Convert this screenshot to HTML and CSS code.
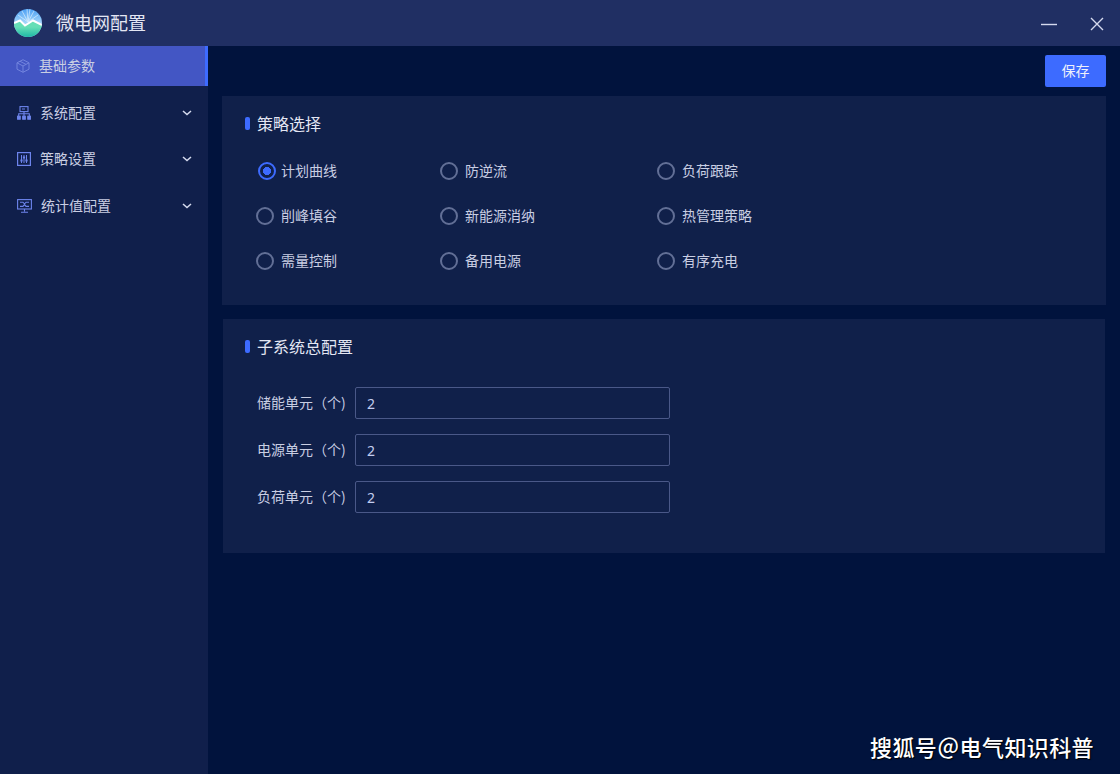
FILE: index.html
```html
<!DOCTYPE html>
<html lang="zh-CN">
<head>
<meta charset="utf-8">
<title>微电网配置</title>
<link rel="stylesheet" href="styles.css">
</head>
<body>
<div class="app">
  <header class="titlebar">
    <div class="brand">
      <svg class="logo" width="28" height="28" viewBox="0 0 28 28">
        <defs>
          <linearGradient id="sky" x1="0" y1="0" x2="0" y2="1"><stop offset="0" stop-color="#4b9ff4"/><stop offset=".5" stop-color="#a5d6fb"/></linearGradient>
          <linearGradient id="hill" x1="0" y1="0" x2="0" y2="1"><stop offset=".4" stop-color="#66dfb6"/><stop offset="1" stop-color="#1eb8a6"/></linearGradient>
          <clipPath id="disc"><circle cx="14" cy="14" r="14"/></clipPath>
        </defs>
        <g clip-path="url(#disc)">
          <rect width="28" height="28" fill="url(#sky)"/>
          <path d="M14 13L13 0M14 13L16 0M14 13L8 2M14 13L20 2M14 13L4 6M14 13L24 6" stroke="#e2f2ff" stroke-width=".8" opacity=".8"/>
          <path d="M0 14L6 11.5L11 16.5L19 11.5L28 16V28H0Z" fill="url(#hill)" stroke="none"/>
          <path d="M0 14L6 11.5L11 16.5L19 11.5L28 16" fill="none" stroke="#fff" stroke-width="2"/>
        </g>
      </svg>
      <span class="app-name">微电网配置</span>
    </div>
    <div class="win-controls">
      <svg width="16" height="16" viewBox="0 0 16 16"><path d="M0 8.5H16" stroke="#d5daee" stroke-width="1.4"/></svg>
      <svg width="14" height="14" viewBox="0 0 14 14"><path d="M1 1L13 13M13 1L1 13" stroke="#d5daee" stroke-width="1.4"/></svg>
    </div>
  </header>
  <div class="body">
    <nav class="sidebar">
      <a class="nav-item active">
        <svg class="ico" width="14" height="14" viewBox="0 0 14 14" fill="none" stroke="#7284de" stroke-width="1"><path d="M7 .7L13 3.8V10.2L7 13.3L1 10.2V3.8ZM1 3.8L7 7L13 3.8M7 7V13.3M4 2.3L10 5.4"/></svg>
        <span class="nav-label">基础参数</span>
      </a>
      <div class="nav-group">
        <a class="nav-item">
          <svg class="ico" width="14" height="14" viewBox="0 0 14 14" fill="none" stroke="#6d84ec" stroke-width="1.1"><rect x="3" y=".6" width="8" height="5"/><path d="M5 3H8M1.7 10V7.8H12.3V10M7 5.6V10"/><rect x=".6" y="10.2" width="2.6" height="3" fill="#6d84ec"/><rect x="5.7" y="10.2" width="2.6" height="3" fill="#6d84ec"/><rect x="10.8" y="10.2" width="2.6" height="3" fill="#6d84ec"/></svg>
          <span class="nav-label">系统配置</span>
          <svg class="chev" width="10" height="6" viewBox="0 0 10 6" fill="none" stroke="#d5daee" stroke-width="1.5"><path d="M1 1L5 4.6L9 1"/></svg>
        </a>
        <a class="nav-item">
          <svg class="ico" width="14" height="14" viewBox="0 0 14 14" fill="none" stroke="#6d84ec" stroke-width="1.2"><rect x=".6" y=".6" width="12.8" height="12.8"/><path d="M4.5 3V11M7 3V11M9.5 3V11" stroke-width="1"/><path d="M3.4 8.5H5.6M5.9 5.5H8.1M8.4 8.5H10.6" stroke-width="1.8"/></svg>
          <span class="nav-label">策略设置</span>
          <svg class="chev" width="10" height="6" viewBox="0 0 10 6" fill="none" stroke="#d5daee" stroke-width="1.5"><path d="M1 1L5 4.6L9 1"/></svg>
        </a>
        <a class="nav-item">
          <svg class="ico" width="15" height="14" viewBox="0 0 15 14" fill="none" stroke="#6d84ec" stroke-width="1.1"><rect x=".6" y=".6" width="13.8" height="9.4"/><path d="M3 3.2H6L7.5 5L9 3.2H12M3 7.4H6L7.5 5.4L9 7.4H12M7.5 10V12.6M4 13.2H11" /></svg>
          <span class="nav-label">统计值配置</span>
          <svg class="chev" width="10" height="6" viewBox="0 0 10 6" fill="none" stroke="#d5daee" stroke-width="1.5"><path d="M1 1L5 4.6L9 1"/></svg>
        </a>
      </div>
    </nav>
    <main class="content">
      <div class="toolbar"><button class="save" type="button">保存</button></div>
      <section class="panel panel-strategy">
        <h2 class="panel-title">策略选择</h2>
        <div class="radio-grid">
          <label class="radio first"><input type="radio" name="s" checked><span>计划曲线</span></label>
          <label class="radio"><input type="radio" name="s"><span>防逆流</span></label>
          <label class="radio"><input type="radio" name="s"><span>负荷跟踪</span></label>
          <label class="radio"><input type="radio" name="s"><span>削峰填谷</span></label>
          <label class="radio"><input type="radio" name="s"><span>新能源消纳</span></label>
          <label class="radio"><input type="radio" name="s"><span>热管理策略</span></label>
          <label class="radio"><input type="radio" name="s"><span>需量控制</span></label>
          <label class="radio"><input type="radio" name="s"><span>备用电源</span></label>
          <label class="radio"><input type="radio" name="s"><span>有序充电</span></label>
        </div>
      </section>
      <section class="panel panel-sub">
        <h2 class="panel-title">子系统总配置</h2>
        <div class="form">
          <label class="field"><span class="field-label">储能单元（个)</span><input class="text" type="text" value="2"></label>
          <label class="field"><span class="field-label">电源单元（个)</span><input class="text" type="text" value="2"></label>
          <label class="field"><span class="field-label">负荷单元（个)</span><input class="text" type="text" value="2"></label>
        </div>
      </section>
    </main>
  </div>
  <div class="watermark">搜狐号＠电气知识科普</div>
</div>
</body>
</html>
```
FILE: styles.css
```css
* { box-sizing: border-box; }
html, body { margin: 0; height: 100%; }
body {
  font-family: "Noto Sans CJK SC", "Noto Sans", sans-serif;
  background: #01133d;
  color: #d5daee;
  overflow: hidden;
}
.app { position: relative; width: 1120px; height: 774px; display: flex; flex-direction: column; }

.titlebar {
  height: 46px;
  flex: none;
  background: #202f63;
  display: flex;
  align-items: center;
  justify-content: space-between;
  padding: 0 16px 0 14px;
}
.brand { display: flex; align-items: center; gap: 14px; }
.logo { display: block; }
.app-name { font-size: 18px; line-height: 24px; padding-bottom: 2px; color: #e3e6f3; }
.win-controls { display: flex; align-items: center; gap: 33px; padding-top: 1px; }
.win-controls svg { display: block; }

.body { flex: 1; display: flex; min-height: 0; }

.sidebar { width: 208px; flex: none; background: #101f4b; }
.nav-group { display: flex; flex-direction: column; gap: 6px; padding-top: 7px; }
.nav-group .nav-item:last-child { margin-top: 1px; }
.nav-item {
  height: 40px;
  display: flex;
  align-items: center;
  gap: 9px;
  padding: 0 16px 0 17px;
  font-size: 14px;
  color: #c9cee3;
}
.nav-item.active {
  background: #4356c4;
  border-right: 3px solid #3d6bff;
  padding-left: 16px;
}
.ico { display: block; flex: none; }
.nav-label { flex: 1; line-height: 20px; padding-bottom: 2px; }
.chev { display: block; flex: none; }

.content { flex: 1; min-width: 0; padding: 0 14px; }
.toolbar { height: 50px; display: flex; justify-content: flex-end; align-items: flex-start; padding-top: 9px; }
.save {
  width: 61px;
  height: 32px;
  border: 0;
  border-radius: 2px;
  background: #3d6bff;
  color: #eef1fb;
  font: 14px "Noto Sans CJK SC", sans-serif;
  padding: 0 0 2px;
}

.panel { background: #10204a; }
.panel-title {
  margin: 0;
  display: flex;
  align-items: center;
  gap: 7px;
  font-size: 16px;
  font-weight: 400;
  line-height: 24px;
  color: #e3e6f3;
}
.panel-title::before {
  content: "";
  width: 5px;
  height: 13px;
  border-radius: 2px;
  background: #3d6bff;
}
.panel-strategy { height: 209px; padding: 15px 23px 0; }
.panel-sub { height: 234px; padding: 15px 22px 0; margin: 14px 1px 0; }

.radio-grid {
  display: grid;
  grid-template-columns: 184px 217px 1fr;
  grid-auto-rows: 45px;
  padding: 13px 0 0 11px;
}
.radio { display: flex; align-items: center; gap: 7px; font-size: 14px; color: #c9cee3; }
.radio span { padding-bottom: 1px; }
.radio input {
  appearance: none;
  width: 18px;
  height: 18px;
  margin: 0;
  flex: none;
  border: 2px solid #626f96;
  border-radius: 50%;
  background: transparent;
}
.radio input:checked {
  border-color: #3d6bff;
  background: radial-gradient(circle, #3d6bff 0 3.8px, transparent 4.3px);
}
.radio.first input { margin-left: 2px; }
.radio.first { gap: 5px; }

.form { display: flex; flex-direction: column; gap: 15px; padding: 29px 0 0 12px; }
.field { display: flex; align-items: center; gap: 9px; }
.field-label { width: 89px; flex: none; font-size: 14px; padding-bottom: 2px; color: #c9cee3; white-space: nowrap; }
.text {
  width: 315px;
  height: 32px;
  padding: 0 11px;
  background: transparent;
  border: 1px solid #4a5888;
  border-radius: 2px;
  color: #c3cdf0;
  font: 14px "Noto Sans", sans-serif;
  outline: none;
}

.watermark {
  position: absolute;
  left: 870px;
  top: 730px;
  font-size: 22px;
  line-height: 33px;
  font-weight: 500;
  letter-spacing: .4px;
  color: #fff;
  text-shadow: 1px 1px 1px #000;
  white-space: nowrap;
}
```
